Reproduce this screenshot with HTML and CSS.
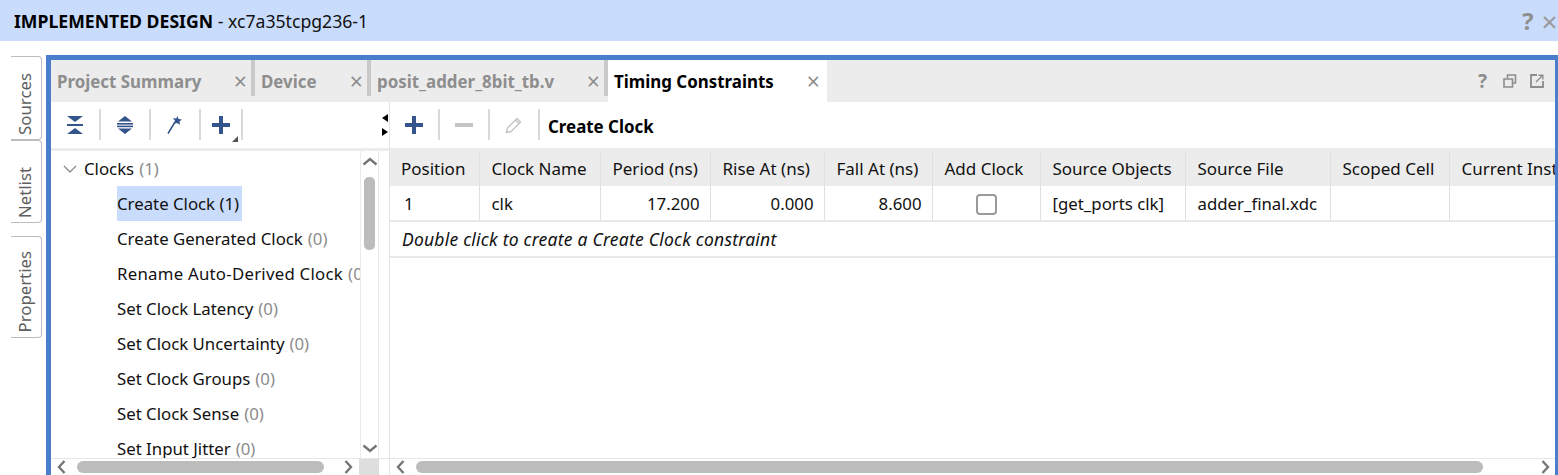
FILE: index.html
```html
<!DOCTYPE html>
<html lang="en">
<head>
<meta charset="utf-8">
<title>Implemented Design</title>
<link rel="stylesheet" href="styles.css">
</head>
<body>
<header class="titlebar">
  <div class="title"><b>IMPLEMENTED DESIGN</b> - xc7a35tcpg236-1</div>
  <div class="title-actions"><span class="help">?</span><span class="title-x">×</span></div>
</header>
<div class="workspace">
  <nav class="side">
    <div class="side-tab tab-sources"><span>Sources</span></div>
    <div class="side-tab tab-netlist"><span>Netlist</span></div>
    <div class="side-tab tab-props"><span>Properties</span></div>
  </nav>
  <main class="panel">
    <div class="tabbar">
      <div class="tab t1"><span class="tab-label">Project Summary</span><span class="close">×</span></div>
      <div class="tab t2"><span class="tab-label">Device</span><span class="close">×</span></div>
      <div class="tab t3"><span class="tab-label">posit_adder_8bit_tb.v</span><span class="close">×</span></div>
      <div class="tab t4 active"><span class="tab-label">Timing Constraints</span><span class="close">×</span></div>
      <div class="tab-actions">
        <span class="mini-help">?</span>
        <svg class="ic" width="14" height="14" viewBox="0 0 14 14"><path d="M4.500 4V1h8v8H9.500M1 5h8.500v8H1z" fill="none" stroke="#8c8c8c" stroke-width="1.600"/></svg>
        <svg class="ic" width="14" height="14" viewBox="0 0 14 14"><path d="M7 1H1v12h12V7" fill="none" stroke="#8c8c8c" stroke-width="1.800"/><path d="M6 8l6-6M8.500 1.200h4.300v4.300" fill="none" stroke="#8c8c8c" stroke-width="1.400"/></svg>
      </div>
    </div>
    <div class="content">
      <section class="left">
        <div class="toolbar left-tools">
          <span class="tool"><svg width="16" height="18" viewBox="0 0 16 18"><path d="M0 0h16l-8 6zM0 18h16l-8-6z" fill="#34548c"/><rect y="8" width="16" height="2" fill="#34548c"/></svg></span>
          <span class="sep"></span>
          <span class="tool"><svg width="16" height="18" viewBox="0 0 16 18"><path d="M8 0l7 5.500H1zM8 18l7-5.500H1z" fill="#34548c"/><rect x="0" y="7" width="16" height="1.600" fill="#34548c"/><rect x="0" y="9.600" width="16" height="1.600" fill="#34548c"/></svg></span>
          <span class="sep"></span>
          <span class="tool"><svg width="16" height="18" viewBox="0 0 16 18"><path d="M1 17.500L8 6" stroke="#34548c" stroke-width="1.500" fill="none"/><path d="M10.500 0l1 3 3.500.500-2.500 2 .500 3.200-3-1.700-3 .700 1-3-2-2.500 3.200.200z" fill="#34548c"/></svg></span>
          <span class="sep"></span>
          <span class="tool plus"><svg width="18" height="18" viewBox="0 0 18 18"><path d="M7 0h4v7h7v4h-7v7H7v-7H0V7h7z" fill="#34548c"/></svg><i class="corner"></i></span>
          <span class="sep"></span>
          <span class="overflow"><i class="ov-l"></i><i class="ov-r"></i></span>
        </div>
        <div class="tree-wrap">
          <ul class="tree">
            <li class="root"><svg class="chev" width="14" height="8" viewBox="0 0 14 8"><path d="M1 1l6 6 6-6" fill="none" stroke="#8f8f8f" stroke-width="1.400"/></svg>Clocks <em>(1)</em></li>
            <li class="leaf"><span class="sel">Create Clock (1)</span></li>
            <li class="leaf">Create Generated Clock <em>(0)</em></li>
            <li class="leaf wide">Rename Auto-Derived Clock <em>(0)</em></li>
            <li class="leaf">Set Clock Latency <em>(0)</em></li>
            <li class="leaf">Set Clock Uncertainty <em>(0)</em></li>
            <li class="leaf">Set Clock Groups <em>(0)</em></li>
            <li class="leaf">Set Clock Sense <em>(0)</em></li>
            <li class="leaf">Set Input Jitter <em>(0)</em></li>
          </ul>
          <div class="vbar">
            <svg class="arrow-up" width="16" height="9" viewBox="0 0 16 9"><path d="M1.500 7.500L8 2l6.500 5.500" fill="none" stroke="#767676" stroke-width="2.400"/></svg>
            <div class="vthumb"></div>
            <svg class="arrow-down" width="16" height="9" viewBox="0 0 16 9"><path d="M1.500 1.500L8 7l6.500-5.500" fill="none" stroke="#767676" stroke-width="2.400"/></svg>
          </div>
          <div class="gutter"></div>
        </div>
        <div class="hbar left-h">
          <svg class="arrow" width="9" height="14" viewBox="0 0 9 14"><path d="M7.500 1L2 7l5.500 6" fill="none" stroke="#767676" stroke-width="2.400"/></svg>
          <div class="hthumb lt"></div>
          <svg class="arrow ar-r" width="9" height="14" viewBox="0 0 9 14"><path d="M1.500 1L7 7l-5.500 6" fill="none" stroke="#767676" stroke-width="2.400"/></svg>
          <div class="hcorner"></div>
        </div>
      </section>
      <section class="right">
        <div class="toolbar right-tools">
          <span class="rtool"><svg width="18" height="18" viewBox="0 0 18 18"><path d="M7 0h4v7h7v4h-7v7H7v-7H0V7h7z" fill="#34548c"/></svg></span>
          <span class="sep"></span>
          <span class="rtool"><svg width="18" height="4" viewBox="0 0 18 4"><rect width="18" height="4" fill="#c4c4c4"/></svg></span>
          <span class="sep"></span>
          <span class="rtool"><svg width="18" height="18" viewBox="0 0 18 18"><path d="M1.500 16.500l1-4.500L12 2.500l3.500 3.500-9.500 9.500zM10.500 4l3.500 3.500" fill="none" stroke="#c4c4c4" stroke-width="1.400"/></svg></span>
          <span class="sep"></span>
          <span class="tool-title">Create Clock</span>
        </div>
        <div class="table-wrap">
          <table class="grid">
            <colgroup>
              <col class="c1"><col class="c2"><col class="c3"><col class="c4"><col class="c5"><col class="c6"><col class="c7"><col class="c8"><col class="c9"><col class="c10">
            </colgroup>
            <thead>
              <tr><th class="first">Position</th><th>Clock Name</th><th>Period (ns)</th><th>Rise At (ns)</th><th>Fall At (ns)</th><th>Add Clock</th><th>Source Objects</th><th>Source File</th><th>Scoped Cell</th><th class="last">Current Instance</th></tr>
            </thead>
            <tbody>
              <tr class="row-one"><td class="pos">1</td><td>clk</td><td class="num">17.200</td><td class="num">0.000</td><td class="num">8.600</td><td class="mid"><span class="check"></span></td><td>[get_ports clk]</td><td>adder_final.xdc</td><td></td><td class="last"></td></tr>
              <tr><td colspan="10" class="hint">Double click to create a Create Clock constraint</td></tr>
            </tbody>
          </table>
          <div class="hbar right-h">
            <svg class="arrow" width="9" height="14" viewBox="0 0 9 14"><path d="M7.500 1L2 7l5.500 6" fill="none" stroke="#767676" stroke-width="2.400"/></svg>
            <div class="hthumb rt"></div>
            <svg class="arrow ar-r" width="9" height="14" viewBox="0 0 9 14"><path d="M1.500 1L7 7l-5.500 6" fill="none" stroke="#767676" stroke-width="2.400"/></svg>
          </div>
        </div>
      </section>
    </div>
  </main>
</div>
</body>
</html>
```
FILE: styles.css
```css
* { box-sizing: border-box; }
html, body { margin: 0; height: 475px; overflow: hidden; background: #fff; }
body {
  font-family: "Noto Sans", "Open Sans", sans-serif;
  font-size: 16.8px;
  color: #111;
  display: flex;
  flex-direction: column;
}
.titlebar {
  height: 41px;
  flex: none;
  background: #c9dcfc;
  display: flex;
  align-items: center;
  padding-left: 14px;
  overflow: hidden;
}
.title { flex: 1; font-size: 17.65px; color: #111; }
.title b { font-weight: 700; color: #000; }
.title-actions { display: flex; align-items: center; gap: 8px; width: 36px; flex: none; white-space: nowrap; }
.help { font-weight: 700; font-size: 24px; color: #8f8f8f; line-height: 1; }
.title-x { font-size: 28px; color: #9a9a9a; line-height: 1; }

.workspace { flex: 1; display: flex; padding-top: 14px; min-height: 0; }
.side { width: 46px; flex: none; padding-left: 11px; padding-top: 1px; display: flex; flex-direction: column; }
.side-tab {
  width: 31px;
  border: 1px solid #bdbdbd;
  border-left: none;
  border-radius: 0 4px 4px 0;
  display: flex;
  align-items: flex-end;
  justify-content: center;
  padding-right: 3px;
  padding-bottom: 4px;
  color: #5e5e5e;
}
.side-tab span { writing-mode: vertical-rl; transform: rotate(180deg); font-size: 16.8px; }
.tab-sources { height: 84px; }
.tab-netlist { height: 83px; }
.tab-props { height: 102px; margin-top: 13px; }

.panel {
  flex: 1;
  min-width: 0;
  border: solid #4a7dcb;
  border-width: 5px 3px 0 5px;
  display: flex;
  flex-direction: column;
  overflow: hidden;
}
.tabbar { height: 42px; flex: none; background: #ececec; display: flex; position: relative; }
.tab {
  display: flex;
  align-items: center;
  justify-content: space-between;
  padding: 0 8px 0 6px;
  font-weight: 700;
  color: #8e8e8e;
  font-size: 16.9px;
  height: 42px;
  white-space: nowrap;
  background: linear-gradient(#c9c9c9, #c9c9c9) right top / 4px 36px no-repeat;
}
.t1 { width: 204px; }
.t2 { width: 116px; }
.t3 { width: 237px; }
.t4 { width: 219px; background: #fff; color: #000; padding-right: 7px; }
.close { font-weight: 400; font-size: 23px; color: #8e8e8e; line-height: 1; }
.tab-actions { margin-left: auto; display: flex; align-items: center; gap: 13px; padding-right: 11px; }
.mini-help { font-weight: 700; font-size: 19px; color: #8c8c8c; width: 12px; }
.ic { display: block; }

.content { flex: 1; display: flex; min-height: 0; }
.left { width: 339px; flex: none; display: flex; flex-direction: column; border-right: 1px solid #e4e4e4; }
.toolbar { height: 49px; flex: none; display: flex; align-items: center; border-bottom: 3px solid #ececec; padding-bottom: 1px; }
.left-tools { position: relative; }
.tool { width: 48px; display: flex; justify-content: center; }
.plus { width: 40px; position: relative; }
.corner {
  position: absolute; right: 3px; bottom: -8px; width: 0; height: 0;
  border-style: solid; border-width: 0 0 6px 6px;
  border-color: transparent transparent #555 transparent;
}
.sep { width: 2px; height: 31px; background: #d9d9d9; flex: none; }
.overflow { margin-left: auto; margin-right: 1px; width: 6px; display: flex; flex-direction: column; gap: 6px; }
.ov-l, .ov-r { display: block; width: 0; height: 0; border-style: solid; }
.ov-l { border-width: 4.500px 6px 4.500px 0; border-color: transparent #000 transparent transparent; }
.ov-r { border-width: 4.500px 0 4.500px 6px; border-color: transparent transparent transparent #000; }

.tree-wrap { flex: 1; display: flex; min-height: 0; overflow: hidden; }
.tree { flex: 1; min-width: 0; margin: 0; padding: 0; list-style: none; overflow: hidden; }
.tree li { height: 35px; display: flex; align-items: center; white-space: nowrap; }
.tree em { font-style: normal; color: #8c8c8c; margin-left: 5px; }
.root { padding-left: 12px; }
.chev { margin-right: 7px; }
.leaf { padding-left: 66px; }
.tree .wide { letter-spacing: .25px; }
.sel { background: #c9dcfc; height: 35px; line-height: 35px; padding-right: 3px; }
.vbar {
  width: 19px; flex: none; border-left: 1px solid #ebebeb; border-right: 1px solid #ebebeb;
  display: flex; flex-direction: column; align-items: center; padding-top: 6px;
}
.vthumb { width: 11px; height: 73px; background: #bcbcbc; border-radius: 5px; margin-top: 11px; }
.arrow-down { margin-top: auto; margin-bottom: 5px; }
.gutter { width: 10px; flex: none; }
.hbar { height: 17px; flex: none; display: flex; align-items: center; border-top: 1px solid #e6e6e6; position: relative; }
.left-h { padding-left: 6px; }
.hthumb { height: 12px; background: #bcbcbc; border-radius: 6px; }
.lt { width: 247px; margin-left: 11px; }
.left-h .ar-r { margin-left: 20px; }
.hcorner { width: 20px; height: 16px; background: #dedede; margin-left: 6px; }
.right-h .arrow { margin-left: 6px; }
.rt { width: 1067px; margin-left: 11px; }
.right-h .ar-r { margin-left: auto; margin-right: 5px; }

.right { flex: 1; min-width: 0; display: flex; flex-direction: column; }
.rtool { width: 48px; display: flex; justify-content: center; }
.tool-title { font-weight: 700; margin-left: 8px; padding-top: 4px; color: #000; font-size: 16.9px; }
.table-wrap { flex: 1; min-height: 0; display: flex; flex-direction: column; overflow: hidden; }
.grid { border-collapse: collapse; table-layout: fixed; width: 1189px; }
.table-wrap .hbar { margin-top: auto; width: 1165px; }
.c1 { width: 89px; } .c2 { width: 121px; } .c3 { width: 110px; } .c4 { width: 114px; }
.c5 { width: 108px; } .c6 { width: 108px; } .c7 { width: 145px; } .c8 { width: 145px; }
.c9 { width: 119px; } .c10 { width: 130px; }
.grid th, .grid td {
  height: 35px; padding: 0 10px 0 12px; text-align: left; font-weight: 400;
  border-right: 1px solid #e0e0e0; white-space: nowrap; overflow: hidden;
}
.grid th { background: #ececec; font-size: 17px; }
.grid .first { padding-left: 11px; }
.grid td { border-bottom: 2px solid #e8e8e8; height: 36px; }
.grid .row-one td { height: 35px; }
.grid .last { border-right: none; }
.grid .num { text-align: right; }
.grid .mid { text-align: center; padding: 0 11px; }
.grid .pos { padding-left: 14px; }
.grid .hint { font-style: italic; border-right: none; padding-left: 12px; font-size: 17.5px; letter-spacing: .23px; }
.check { display: inline-block; width: 21px; height: 21px; border: 2px solid #9a9a9a; border-radius: 4px; vertical-align: middle; }
```
